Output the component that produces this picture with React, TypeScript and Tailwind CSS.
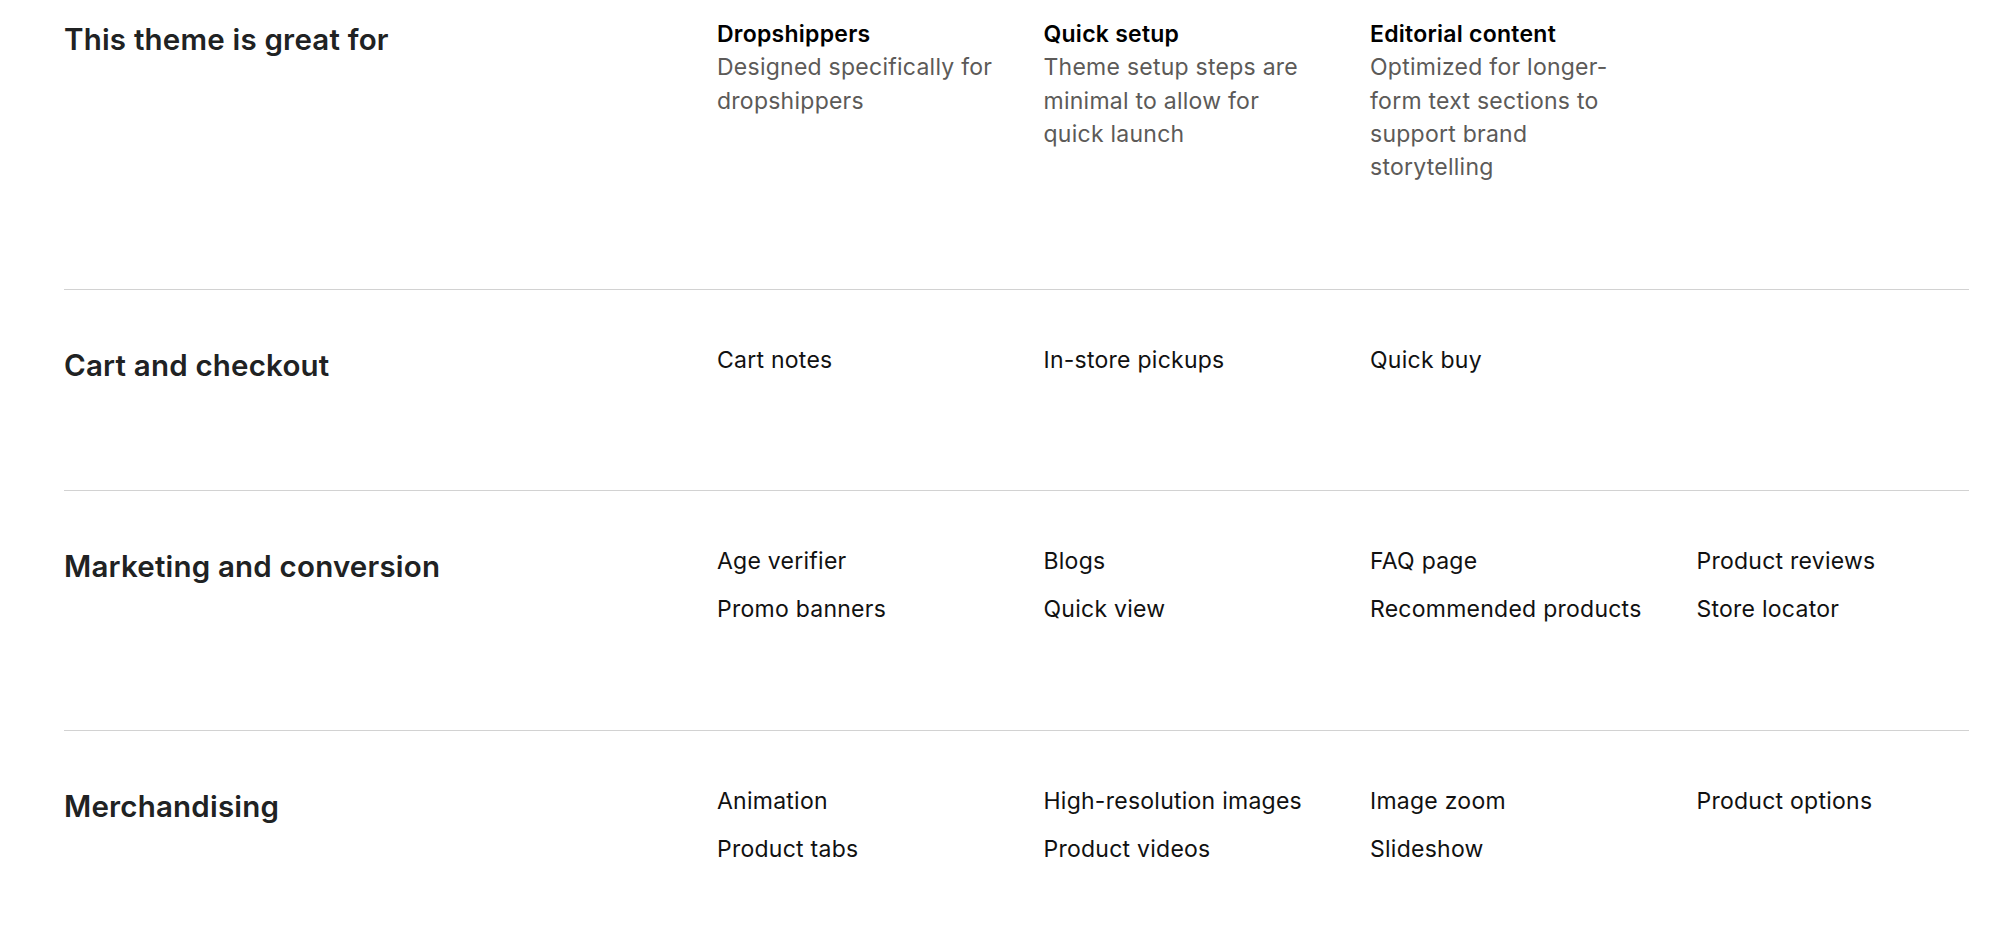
type Feature = { title: string; text: string };

type Section = {
  heading: string;
  features?: Feature[];
  items?: string[];
};

const sections: Section[] = [
  {
    heading: 'This theme is great for',
    features: [
      { title: 'Dropshippers', text: 'Designed specifically for dropshippers' },
      { title: 'Quick setup', text: 'Theme setup steps are minimal to allow for quick launch' },
      {
        title: 'Editorial content',
        text: 'Optimized for longer-form text sections to support brand storytelling',
      },
    ],
  },
  {
    heading: 'Cart and checkout',
    items: ['Cart notes', 'In-store pickups', 'Quick buy'],
  },
  {
    heading: 'Marketing and conversion',
    items: [
      'Age verifier',
      'Blogs',
      'FAQ page',
      'Product reviews',
      'Promo banners',
      'Quick view',
      'Recommended products',
      'Store locator',
    ],
  },
  {
    heading: 'Merchandising',
    items: [
      'Animation',
      'High-resolution images',
      'Image zoom',
      'Product options',
      'Product tabs',
      'Product videos',
      'Slideshow',
    ],
  },
];

function FeatureRow({ section, first }: { section: Section; first: boolean }) {
  return (
    <section
      className={
        first
          ? 'grid grid-cols-12 gap-x-[54px] pt-[18px] pb-[105px]'
          : 'grid grid-cols-12 gap-x-[54px] border-t border-[#d2d2d2] pt-[54px] pb-[104px]'
      }
    >
      <h2 className="col-span-4 text-[29.5px] leading-[42px] font-semibold tracking-[0.2px] text-[#202223]">
        {section.heading}
      </h2>

      <div className="col-span-8 grid grid-cols-4 gap-x-[54px] gap-y-[15px]">
        {section.features?.map((f) => (
          <div key={f.title} className="text-[23px] leading-[33.3px] tracking-[0.25px]">
            <p className="font-semibold text-black">{f.title}</p>
            <p className="w-[276px] text-[#5c5a58]">{f.text}</p>
          </div>
        ))}
        {section.items?.map((item) => (
          <p key={item} className="text-[23px] leading-[33px] tracking-[0.25px] text-[#111111]">
            {item}
          </p>
        ))}
      </div>
    </section>
  );
}

export default function App() {
  return (
    <div className="min-h-screen bg-white" style={{ fontFamily: 'Inter, "Noto Sans", sans-serif' }}>
      <div className="ml-16 w-[1905px]">
        {sections.map((s, i) => (
          <FeatureRow key={s.heading} section={s} first={i === 0} />
        ))}
      </div>
    </div>
  );
}
